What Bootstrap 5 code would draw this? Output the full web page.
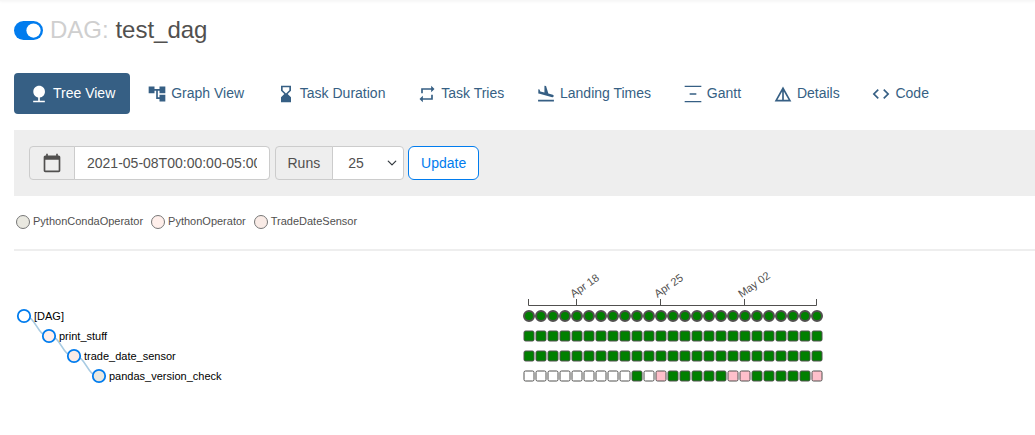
<!DOCTYPE html>
<html lang="en">
<head>
  <meta charset="UTF-8">
  <title>Airflow - test_dag</title>
  <link href="https://cdn.jsdelivr.net/npm/bootstrap@5.3.3/dist/css/bootstrap.min.css" rel="stylesheet">
  <style>
    html, body { overflow: hidden; }
    body {
      font-family: "Liberation Sans", Arial, sans-serif;
      font-size: 14px;
      color: #51504f;
      background: #fff;
    }
    .top-edge { height: 1px; background: #f7f7f7; box-shadow: 0 0 3px rgba(0, 0, 0, .12); }
    .page-wrap { padding-left: 14px; }
    .dag-title { height: 72px; padding: 14px 0 28px; margin: 0; font-size: 24px; line-height: 30px; font-weight: 400; color: #51504f; }
    .dag-title .dag-prefix { color: #cfcfcf; }
    .dag-title .dag-name { margin-left: 6.7px; }
    .switch-wrap.form-check { padding: 0; margin: 0 7px 0 0; min-height: 0; display: flex; }
    .form-switch .dag-switch.form-check-input { width: 29px; height: 19px; margin: 0; float: none; border: 0; background-color: #017cee; background-size: contain; }
    .view-tabs { height: 41px; margin-bottom: 16px; }
    .view-tabs .nav-link { height: 41px; padding: 0 15.9px; border-radius: 4px; color: #365f84; font-size: 14px; display: flex; align-items: center; }
    .view-tabs .nav-link.active { padding: 0 15px; margin-right: 1px; background: #365f84; color: #fff; }
    .tab-icon { width: 20px; height: 20px; margin-right: 4px; fill: currentColor; flex: none; }
    .filter-bar { background: #eee; height: 66px; padding: 16px 15px; gap: 5px; }
    .filter-bar .input-group { width: auto; flex-wrap: nowrap; }
    .filter-bar .input-group-text, .filter-bar .form-control, .filter-bar .form-select {
      height: 34px; font-size: 14px; color: #51504f; border-color: #ccc; border-radius: 4px;
    }
    .filter-bar .input-group-text { background: #eee; padding: 0 12px 0 11.5px; }
    .filter-bar .date-addon { width: 46px; padding: 0; justify-content: center; }
    .date-input.form-control { width: 196px; flex: none; padding: 0 12px; }
    .runs-select.form-select { width: 72px; flex: none; padding: 0 24px 0 15px; background-position: right 5px center; background-size: 12px 10px; }
    .update-btn.btn { height: 34px; width: 71px; padding: 0; margin-left: -1px; font-size: 14px; color: #017cee; border-color: #017cee; background: #fff; }
    .cal-icon { width: 20px; height: 20px; fill: #51504f; }
    .legend-row { height: 55px; padding: 0 2px 2px; gap: 8px; font-size: 11px; color: #51504f; border-bottom: 2px solid #eee; }
    .legend-dot { width: 14px; height: 14px; border-radius: 50%; border: 1px solid #777; margin-right: 3px; flex: none; }
    .tree-canvas { display: block; width: 1021px; height: 145px; }
    .tree-canvas text { font-family: "Liberation Sans", Arial, sans-serif; font-size: 11px; }
  </style>
</head>
<body>
  <div class="top-edge"></div>
  <div class="page-wrap">
    <h4 class="dag-title d-flex align-items-center">
      <div class="form-check form-switch switch-wrap">
        <input class="form-check-input dag-switch" type="checkbox" role="switch" checked aria-label="Pause DAG">
      </div>
      <span class="dag-prefix">DAG:</span><span class="dag-name">test_dag</span>
    </h4>

    <ul class="nav nav-pills view-tabs flex-nowrap">
      <li class="nav-item"><a class="nav-link active" href="#"><svg class="tab-icon" viewBox="0 0 24 24"><path d="M13 16.12c3.47-.41 6.17-3.36 6.17-6.95 0-3.87-3.13-7-7-7s-7 3.13-7 7c0 3.47 2.52 6.34 5.83 6.89V20H5v2h14v-2h-6v-3.88z"/></svg>Tree View</a></li>
      <li class="nav-item"><a class="nav-link" href="#"><svg class="tab-icon" viewBox="0 0 24 24"><path d="M22 11V3h-7v3H9V3H2v8h7V8h2v10h4v3h7v-8h-7v3h-2V8h2v3z"/></svg>Graph View</a></li>
      <li class="nav-item"><a class="nav-link" href="#"><svg class="tab-icon" viewBox="0 0 24 24"><path d="M18 22l-.01-6L14 12l3.99-4.01L18 2H6v6l4 4-4 3.99V22h12zM8 7.5V4h8v3.5l-4 4-4-4z"/></svg>Task Duration</a></li>
      <li class="nav-item"><a class="nav-link" href="#"><svg class="tab-icon" viewBox="0 0 24 24"><path d="M7 7h10v3l4-4-4-4v3H5v6h2V7zm10 10H7v-3l-4 4 4 4v-3h12v-6h-2v4z"/></svg>Task Tries</a></li>
      <li class="nav-item"><a class="nav-link" href="#"><svg class="tab-icon" viewBox="0 0 24 24"><path d="M2.5 19h19v2h-19v-2zm7.18-5.73l4.35 1.16 5.31 1.42c.8.21 1.62-.26 1.84-1.06.21-.8-.26-1.62-1.06-1.84l-5.31-1.42-2.76-9.02L10.12 2v8.28L5.15 8.95l-.93-2.32-1.45-.39v5.17l1.6.43 5.31 1.43z"/></svg>Landing Times</a></li>
      <li class="nav-item"><a class="nav-link" href="#"><svg class="tab-icon" viewBox="0 0 24 24"><path d="M2 2h20v1.500H2zM2 20.500h20V22H2zM8 11h8v2H8z"/></svg>Gantt</a></li>
      <li class="nav-item"><a class="nav-link" href="#"><svg class="tab-icon" viewBox="0 0 24 24"><path d="M12 3L2 21h20L12 3zm1 5.920L18.600 19H13V8.920zm-2 0V19H5.400L11 8.920z"/></svg>Details</a></li>
      <li class="nav-item"><a class="nav-link" href="#"><svg class="tab-icon" viewBox="0 0 24 24"><path d="M9.400 16.600L4.800 12l4.600-4.600L8 6l-6 6 6 6 1.400-1.400zm5.200 0l4.600-4.600-4.600-4.600L16 6l6 6-6 6-1.400-1.400z"/></svg>Code</a></li>
    </ul>

    <form class="filter-bar d-flex align-items-start" onsubmit="return false">
      <div class="input-group">
        <span class="input-group-text date-addon"><svg class="cal-icon" viewBox="0 0 24 24"><path d="M20 3h-1V1h-2v2H7V1H5v2H4c-1.100 0-2 .9-2 2v16c0 1.100.9 2 2 2h16c1.100 0 2-.9 2-2V5c0-1.100-.9-2-2-2zm0 18H4V8h16v13z"/></svg></span>
        <input class="form-control date-input" type="text" value="2021-05-08T00:00:00-05:00" aria-label="Base date">
      </div>
      <div class="input-group">
        <span class="input-group-text">Runs</span>
        <select class="form-select runs-select" aria-label="Runs"><option>25</option></select>
      </div>
      <button class="btn update-btn" type="submit">Update</button>
    </form>

    <div class="legend-row d-flex align-items-center" id="legend"></div>

    <svg class="tree-canvas" id="tree" viewBox="14 251 1021 145" xmlns="http://www.w3.org/2000/svg"></svg>
  </div>

  <script>
    const NS = 'http://www.w3.org/2000/svg';
    const tree = document.getElementById('tree');

    const operators = [
      { name: 'PythonCondaOperator', color: '#e9e8e0' },
      { name: 'PythonOperator', color: '#ffefeb' },
      { name: 'TradeDateSensor', color: '#f9ebe6' }
    ];

    const legend = document.getElementById('legend');
    operators.forEach(op => {
      const item = document.createElement('span');
      item.className = 'd-inline-flex align-items-center';
      const dot = document.createElement('span');
      dot.className = 'legend-dot';
      dot.style.background = op.color;
      item.append(dot, op.name);
      legend.append(item);
    });

    function add(tag, attrs, text) {
      const el = document.createElementNS(NS, tag);
      for (const k in attrs) el.setAttribute(k, attrs[k]);
      if (text) el.textContent = text;
      tree.append(el);
      return el;
    }

    // axis
    add('path', { d: 'M528.500 299V305.500H816.500V299', fill: 'none', stroke: '#51504f' });
    [[576.5, 'Apr 18'], [660.5, 'Apr 25'], [744.5, 'May 02']].forEach(([x, label]) => {
      add('line', { x1: x, x2: x, y1: 299, y2: 305, stroke: '#51504f' });
      add('text', { x: 0, y: 0, fill: '#51504f', transform: `translate(${x - 3} 298) rotate(-35)` }, label);
    });

    // tree links + nodes
    const nodes = [
      { name: '[DAG]', fill: '#fff' },
      { name: 'print_stuff', fill: '#ffefeb' },
      { name: 'trade_date_sensor', fill: '#f9ebe6' },
      { name: 'pandas_version_check', fill: '#e9e8e0' }
    ];
    for (let i = 0; i < 3; i++) {
      const x = 24 + i * 25, y = 316 + i * 20;
      const mx = x + 12.5;
      add('path', { d: `M${x} ${y}C${mx} ${y} ${mx} ${y + 20} ${x + 25} ${y + 20}`, fill: 'none', stroke: '#a8cbe3', 'stroke-width': 1.5 });
    }
    nodes.forEach((n, i) => {
      const x = 24 + i * 25, y = 316 + i * 20;
      add('circle', { cx: x, cy: y, r: 6.2, fill: n.fill, stroke: '#017cee', 'stroke-width': 1.8 });
      add('text', { x: x + 10, y: y + 4, fill: '#000' }, n.name);
    });

    // task instance grid
    for (let i = 0; i < 25; i++) {
      add('circle', { cx: 529 + i * 12, cy: 316, r: 5, fill: '#008000', stroke: '#51504f', 'stroke-width': 2 });
    }
    const lastRow = i => {
      if (i < 9 || i === 10) return '#fff';
      if (i === 11 || i === 17 || i === 18 || i === 24) return '#ffc0cb';
      return '#008000';
    };
    [331, 351, 371].forEach((y, row) => {
      for (let i = 0; i < 25; i++) {
        add('rect', {
          x: 524 + i * 12, y, width: 10, height: 10, rx: 1.5,
          fill: row === 2 ? lastRow(i) : '#008000',
          stroke: '#51504f'
        });
      }
    });
  </script>
  <script src="https://cdn.jsdelivr.net/npm/bootstrap@5.3.3/dist/js/bootstrap.bundle.min.js"></script>
</body>
</html>
